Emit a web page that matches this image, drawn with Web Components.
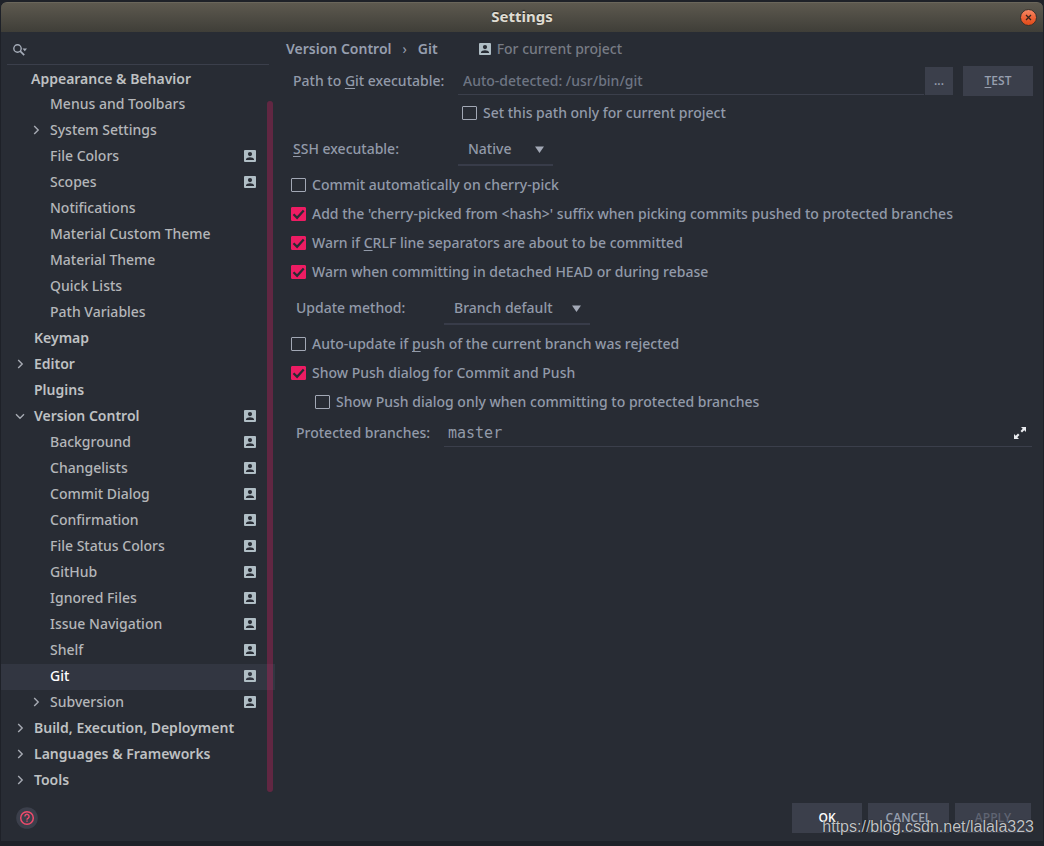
<!DOCTYPE html>
<html lang="en">
<head>
<meta charset="utf-8">
<title>Settings</title>
<style>
  html, body { margin: 0; background: #1e2128; }
  body { font: 500 14px/20px "Noto Sans", "Open Sans", sans-serif; color: #929aa9; }
</style>
</head>
<body>
<settings-window></settings-window>

<script>
const SCOPE_ICON = `<svg width="12" height="12" viewBox="0 0 12 12" aria-hidden="true">
  <path fill="#b0bec5" fill-rule="evenodd" d="M1 0h10a1 1 0 0 1 1 1v10a1 1 0 0 1-1 1H1a1 1 0 0 1-1-1V1a1 1 0 0 1 1-1zM6 2a2 2 0 1 0 0 4.200A2 2 0 0 0 6 2zM2 10h8v-.8C10 7.900 7.600 7.200 6 7.200S2 7.900 2 9.200z"/></svg>`;

function define(name, html, setup) {
  const template = document.createElement('template');
  template.innerHTML = `<style>*, :host { box-sizing: border-box; } svg { display: block; }</style>` + html;
  customElements.define(name, class extends HTMLElement {
    constructor() {
      super();
      this.attachShadow({ mode: 'open' }).append(template.content.cloneNode(true));
    }
    connectedCallback() { if (setup) setup(this, this.shadowRoot); }
  });
}

define('title-bar', `
<style>
  :host { display: grid; grid-template-columns: 1fr auto 1fr; align-items: center; height: 30px; padding: 0 6px;
    background: linear-gradient(#5d594f, #3f3e38); border-top: 1px solid #6a665b; border-radius: 6px 6px 0 0; }
  h1 { grid-column: 2; margin: 0; padding-bottom: 3px; font-size: 15px; line-height: 20px; font-weight: 700; color: #dfdbd2; text-shadow: 0 -1px 1px #2a2925; }
  button { justify-self: end; padding: 0 0 1px; border: 0; background: none; }
</style>
<h1><slot></slot></h1>
<button aria-label="Close"><svg width="17" height="17" viewBox="0 0 17 17">
  <defs><linearGradient id="g" x2="0" y2="1"><stop stop-color="#f68b68"/><stop offset=".5" stop-color="#ee6439"/><stop offset="1" stop-color="#df4a17"/></linearGradient></defs>
  <circle cx="8.500" cy="8.500" r="8" fill="url(#g)" stroke="#33322d"/>
  <path d="M6 6l5 5M11 6l-5 5" stroke="#38251d" stroke-width="1.300"/></svg></button>`);

define('search-field', `
<style>
  :host { display: flex; align-items: center; gap: 4px; height: 33px; margin: 0 6px; padding: 4px 6px 0; border-bottom: 1px solid #3b3f4b; }
  input { flex: 1; min-width: 0; border: 0; outline: 0; background: none; color: inherit; font: inherit; }
</style>
<svg width="14" height="12" viewBox="0 0 14 12" fill="none"><circle cx="4.500" cy="4.500" r="3.700" stroke="#a5acb8" stroke-width="1.400"/><path d="M7.200 7.200l4 4" stroke="#a5acb8" stroke-width="1.700"/><path d="M9.500 4.500h4.500l-2.200 2.800z" fill="#a5acb8"/></svg>
<input type="text" aria-label="Search settings">`);

define('tree-item', `
<style>
  :host { display: flex; align-items: center; height: 26px; padding: 0 19px 2px 14px; color: #b4b6b9; }
  :host([level="1"]) { padding-left: 30px; }
  :host([level="0"]) { font-weight: 600; color: #bfc1c3; }
  :host([sticky]) { height: 27px; padding-left: 11px; padding-bottom: 0; }
  :host([selected]) { background: #323641; color: #fff; }
  .arrow { width: 19px; flex: none; }
  svg { visibility: hidden; }
  .arrow svg { width: 10px; height: 10px; fill: none; stroke: #a7abb3; stroke-width: 1.400; }
  :host([state]) .arrow svg, :host([scoped]) .scope svg { visibility: visible; }
  :host([state="open"]) .arrow svg { transform: rotate(90deg); }
  .label { flex: 1; white-space: nowrap; }
</style>
<span class="arrow"><svg viewBox="0 0 10 10"><path d="M3.200 1l4 4-4 4"/></svg></span>
<span class="label"><slot></slot></span>
<span class="scope">${SCOPE_ICON}</span>`);

define('settings-tree', `
<style>
  :host { display: block; position: relative; }
  .thumb { position: absolute; top: 36px; bottom: 2px; right: 2px; width: 6px; border-radius: 3px; background: rgba(233, 30, 99, .3); }
</style>
<nav aria-label="Settings pages"><slot></slot></nav><div class="thumb"></div>`);

define('check-option', `
<style>
  :host { display: flex; align-items: center; height: 29px; padding-left: 10px; }
  :host([nested]) { padding-left: 34px; }
  label { display: flex; align-items: center; gap: 6px; white-space: nowrap; }
  .box { display: grid; flex: none; }
  .box > * { grid-area: 1 / 1; }
  input { appearance: none; width: 15px; height: 14px; margin: 0; border: 1px solid #a2a8b5; border-radius: 1px; }
  input:checked { background: #ed1c63; border-color: #ed1c63; }
  svg { visibility: hidden; pointer-events: none; }
  input:checked + svg { visibility: visible; }
</style>
<label><span class="box"><input type="checkbox"><svg width="15" height="14" viewBox="0 0 15 14"><path d="M2.500 7.200l3.600 3.600 6.600-7.300" fill="none" stroke="#282c34" stroke-width="2.200"/></svg></span><span><slot></slot></span></label>`,
(host, root) => { root.querySelector('input').checked = host.hasAttribute('checked'); });

define('select-row', `
<style>
  :host { display: flex; align-items: center; height: 38px; }
  label { flex: none; width: var(--label-width); padding-left: var(--label-inset); white-space: nowrap; }
  .select { display: grid; align-items: center; width: var(--select-width); height: 34px; padding-top: 2px; border-bottom: 2px solid #383c49; }
  .select > * { grid-area: 1 / 1; }
  select { appearance: none; width: 100%; height: 30px; padding: 0 10px; border: 0; outline: 0; background: none; color: inherit; font: inherit; }
  svg { justify-self: end; margin-right: 9px; pointer-events: none; }
</style>
<label for="choice"><slot></slot></label>
<span class="select"><select id="choice"><option></option></select><svg width="9" height="7" viewBox="0 0 9 7"><path d="M0 .5h9L4.500 7z" fill="#a3a9b6"/></svg></span>`,
(host, root) => { root.querySelector('option').textContent = host.getAttribute('value'); });

define('push-button', `
<style>
  :host { display: block; flex: none; }
  button { display: block; width: 100%; height: 30px; padding: 0; border: 0; background: #3b3f4b; color: #979faf; font: 600 12px/20px "Open Sans", "Noto Sans", sans-serif; }
  :host([compact]) button { height: 28px; }
  :host([primary]) button { color: #fff; }
  button:disabled { color: #5f6472; }
</style>
<button><slot></slot></button>`,
(host, root) => { root.querySelector('button').disabled = host.hasAttribute('disabled'); });

define('page-heading', `
<style>
  :host { display: flex; align-items: center; height: 34px; padding: 0 5px; white-space: nowrap; }
  h2 { margin: 0; font: 600 14px/20px "Noto Sans", "Open Sans", sans-serif; display: flex; gap: 11px; color: #979faf; }
  h2 i { font-style: normal; font-weight: 400; }
  svg { margin: 0 6px 0 41px; }
  .note { color: #777b84; }
</style>
<h2><slot></slot><i>›</i><slot name="page"></slot></h2>${SCOPE_ICON}<span class="note"><slot name="note"></slot></span>`);

define('path-row', `
<style>
  :host { display: flex; align-items: center; height: 30px; padding-left: 12px; }
  label { flex: none; width: 165px; white-space: nowrap; }
  input { flex: 1; min-width: 0; height: 28px; padding: 0 5px; border: 0; border-bottom: 1px solid #3b3f4b; outline: 0; background: none; color: inherit; font: inherit; }
  input::placeholder { color: #6e7583; opacity: 1; }
  .browse { width: 28px; margin: 0 10px 0 1px; }
  .test { width: 70px; }
  u { text-decoration-skip-ink: none; text-underline-offset: 2px; }
</style>
<label for="path">Path to <u>G</u>it executable:</label>
<input id="path" type="text" placeholder="Auto-detected: /usr/bin/git">
<push-button class="browse" compact>...</push-button>
<push-button class="test"><u>T</u>EST</push-button>`);

define('branches-row', `
<style>
  :host { display: flex; height: 31px; padding-left: 15px; }
  label { flex: none; width: 148px; line-height: 34px; white-space: nowrap; }
  .field { display: flex; flex: 1; align-items: center; margin-right: 1px; padding: 3px 6px 0 4px; border-bottom: 1px solid #3b3f4b; }
  input { flex: 1; min-width: 0; padding: 0; border: 0; outline: 0; background: none; color: inherit; font: 15px/20px "DejaVu Sans Mono", monospace; }
  button { padding: 0; border: 0; background: none; }
</style>
<label for="branches">Protected branches:</label>
<span class="field"><input id="branches" type="text" value="master">
<button aria-label="Expand"><svg width="12" height="12" viewBox="0 0 12 12"><path d="M7 0h5v5l-1.700-1.700-2.300 2.200-1.500-1.500 2.200-2.300zM5 12H0V7l1.700 1.700L4 6.500 5.500 8 3.300 10.300z" fill="#e8eaee"/></svg></button></span>`);

define('git-settings', `
<style>
  :host { display: block; }
  .override { padding: 2px 0 3px 171px; }
  .ssh { --label-inset: 12px; --label-width: 177px; --select-width: 95px; margin-bottom: 2px; }
  .update { --label-inset: 15px; --label-width: 163px; --select-width: 146px; padding: 5px 0 4px; height: 43px; }
  u { text-decoration-skip-ink: none; text-underline-offset: 2px; }
</style>
<page-heading>Version Control<span slot="page">Git</span><span slot="note">For current project</span></page-heading>
<path-row></path-row>
<div class="override"><check-option>Set this path only for current project</check-option></div>
<select-row class="ssh" value="Native"><u>S</u>SH executable:</select-row>
<check-option>Commit automatically on cherry-pick</check-option>
<check-option checked>Add the 'cherry-picked from &lt;hash&gt;' suffix when picking commits pushed to protected branches</check-option>
<check-option checked>Warn if <u>C</u>RLF line separators are about to be committed</check-option>
<check-option checked>Warn when committing in detached HEAD or during rebase</check-option>
<select-row class="update" value="Branch default">Update method:</select-row>
<check-option>Auto-update if <u>p</u>ush of the current branch was rejected</check-option>
<check-option checked>Show Push dialog for Commit and Push</check-option>
<check-option nested>Show Push dialog only when committing to protected branches</check-option>
<branches-row></branches-row>`);

define('dialog-footer', `
<style>
  :host { display: flex; align-items: center; gap: 6px; height: 47px; padding: 0 12px 0 15px; position: relative; }
  .help { margin-right: auto; padding: 0; border: 0; background: none; }
  .ok { width: 70px; } .cancel { width: 81px; } .apply { width: 76px; }
  .mark { position: absolute; right: 9px; top: 23px; font: 16px/20px "Liberation Sans", sans-serif; color: #cfd1d4; opacity: .9; text-shadow: 0 0 1px #000; pointer-events: none; }
</style>
<button class="help" aria-label="Help"><svg width="22" height="22" viewBox="0 0 22 22" fill="none">
  <circle cx="11" cy="11" r="10.800" fill="#3b3f4b"/><circle cx="11" cy="11" r="6.300" stroke="#f04b6c" stroke-width="1.500"/>
  <path d="M8.900 9.400a2.100 2.100 0 1 1 3.300 1.700c-.8.5-1.200.8-1.200 1.600M11 13.500v1.300" stroke="#f04b6c" stroke-width="1.400"/></svg></button>
<push-button class="ok" primary>OK</push-button>
<push-button class="cancel">CANCEL</push-button>
<push-button class="apply" disabled>APPLY</push-button>
<span class="mark">https://blog.csdn.net/lalala323</span>`);

define('settings-window', `
<style>
  :host { display: flex; flex-direction: column; min-height: 100vh; padding: 2px 1px 5px; }
  .body { flex: 1; display: flex; flex-direction: column; background: #282c34; }
  .columns { flex: 1; display: grid; grid-template-columns: 274px minmax(0, 1fr); }
  git-settings { padding: 0 10px 0 6px; }
</style>
<title-bar>Settings</title-bar>
<div class="body">
  <div class="columns">
    <aside>
      <search-field></search-field>
      <settings-tree></settings-tree>
    </aside>
    <git-settings></git-settings>
  </div>
  <dialog-footer></dialog-footer>
</div>`, (host, root) => {
  const pages = [
    ['Appearance & Behavior', 0, 'sticky'],
    ['Menus and Toolbars', 1], ['System Settings', 1, 'closed'], ['File Colors', 1, 'scoped'], ['Scopes', 1, 'scoped'],
    ['Notifications', 1], ['Material Custom Theme', 1], ['Material Theme', 1], ['Quick Lists', 1], ['Path Variables', 1],
    ['Keymap', 0], ['Editor', 0, 'closed'], ['Plugins', 0], ['Version Control', 0, 'open scoped'],
    ['Background', 1, 'scoped'], ['Changelists', 1, 'scoped'], ['Commit Dialog', 1, 'scoped'], ['Confirmation', 1, 'scoped'],
    ['File Status Colors', 1, 'scoped'], ['GitHub', 1, 'scoped'], ['Ignored Files', 1, 'scoped'], ['Issue Navigation', 1, 'scoped'],
    ['Shelf', 1, 'scoped'], ['Git', 1, 'scoped selected'], ['Subversion', 1, 'closed scoped'],
    ['Build, Execution, Deployment', 0, 'closed'], ['Languages & Frameworks', 0, 'closed'], ['Tools', 0, 'closed'],
  ];
  root.querySelector('settings-tree').append(...pages.map(([text, level, flags = '']) => {
    const item = document.createElement('tree-item');
    item.textContent = text;
    item.setAttribute('level', level);
    for (const flag of flags.split(' ').filter(Boolean)) {
      if (flag === 'open' || flag === 'closed') item.setAttribute('state', flag);
      else item.toggleAttribute(flag, true);
    }
    return item;
  }));
});
</script>
</body>
</html>
